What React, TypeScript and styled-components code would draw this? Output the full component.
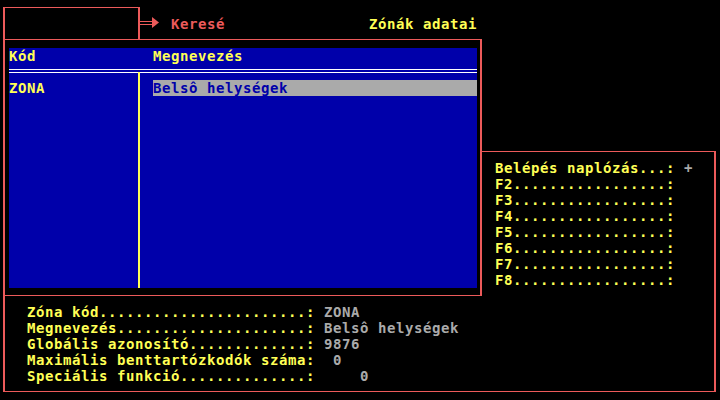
import { createGlobalStyle, styled } from "styled-components";

const colors = {
  black: "#000000",
  blue: "#0000aa",
  red: "#ec5a5a",
  yellow: "#ffff55",
  gray: "#aaaaaa",
  white: "#ffffff",
};

const details = [
  { label: "Zóna kód", value: "ZONA" },
  { label: "Megnevezés", value: "Belsô helységek" },
  { label: "Globális azonosító", value: "9876" },
  { label: "Maximális benttartózkodók száma", value: " 0" },
  { label: "Speciális funkció", value: "    0" },
];

const switches = [
  { label: "Belépés naplózás", value: "+" },
  { label: "F2", value: "" },
  { label: "F3", value: "" },
  { label: "F4", value: "" },
  { label: "F5", value: "" },
  { label: "F6", value: "" },
  { label: "F7", value: "" },
  { label: "F8", value: "" },
];

const dotted = (text: string, width: number) =>
  text + ".".repeat(Math.max(0, width - text.length)) + ":";

const App = () => {
  return (
    <>
      <GlobalStyle />
      <Screen>
        <SearchBox />
        <Arrow width="27" height="16" viewBox="0 0 27 16">
          <rect x="5" y="5" width="13" height="1" fill={colors.red} />
          <rect x="5" y="8" width="13" height="1" fill={colors.red} />
          <polygon points="17,1 24,6.5 17,12" fill={colors.red} />
        </Arrow>
        <SearchLabel>Keresé</SearchLabel>
        <WindowTitle>Zónák adatai</WindowTitle>

        <ListFrame>
          <ListBody>
            <ListHeader>
              <span>Kód</span>
              <span>Megnevezés</span>
            </ListHeader>
            <DoubleRule />
            <ListRows>
              <CodeColumn>
                <Row>ZONA</Row>
              </CodeColumn>
              <Separator />
              <NameColumn>
                <Row $selected>Belsô helységek</Row>
              </NameColumn>
            </ListRows>
          </ListBody>
        </ListFrame>

        <SwitchPanel>
          {switches.map((s) => (
            <Line key={s.label}>
              <Label>{dotted(s.label, 19)}</Label>
              <Value>{s.value ? " " + s.value : ""}</Value>
            </Line>
          ))}
        </SwitchPanel>

        <DetailPanel>
          {details.map((d) => (
            <Line key={d.label}>
              <Label>{dotted(d.label, 31)}</Label>
              <Value> {d.value}</Value>
            </Line>
          ))}
        </DetailPanel>
      </Screen>
    </>
  );
};

export default App;

const GlobalStyle = createGlobalStyle`
  html, body {
    margin: 0;
    padding: 0;
    background: #000000;
  }
`;

const Screen = styled.div`
  width: 720px;
  height: 400px;
  overflow: hidden;
  display: grid;
  grid-template-columns: repeat(80, 9px);
  grid-template-rows: repeat(25, 16px);
  background: ${colors.black};
  font-family: "DejaVu Sans Mono", "Liberation Mono", monospace;
  font-size: 14px;
  font-weight: bold;
  line-height: 16px;
  letter-spacing: 0.57px;
  white-space: pre;
`;

const SearchBox = styled.div`
  grid-column: 1 / 17;
  grid-row: 1 / 4;
  margin: 7px 4px 9px 3px;
  border: solid ${colors.red};
  border-width: 1px 2px 0 2px;
`;

const Arrow = styled.svg`
  grid-column: 16 / 19;
  grid-row: 2 / 3;
  display: block;
`;

const SearchLabel = styled.div`
  grid-column: 20 / 30;
  grid-row: 2 / 3;
  color: ${colors.red};
`;

const WindowTitle = styled.div`
  grid-column: 42 / 54;
  grid-row: 2 / 3;
  color: ${colors.yellow};
`;

const ListFrame = styled.div`
  grid-column: 1 / 55;
  grid-row: 3 / 20;
  margin: 7px 4px 8px 3px;
  border: solid ${colors.red};
  border-width: 1px 2px 1px 2px;
  padding: 8px 3px 7px 4px;
  display: flex;
`;

const ListBody = styled.div`
  flex: 1;
  display: flex;
  flex-direction: column;
  background: ${colors.blue};
  color: ${colors.yellow};
`;

const ListHeader = styled.div`
  height: 16px;
  display: grid;
  grid-template-columns: 144px 1fr;
`;

const DoubleRule = styled.div`
  height: 2px;
  margin: 5px 0 7px 0;
  border-top: 1px solid ${colors.white};
  border-bottom: 1px solid ${colors.white};
`;

const ListRows = styled.div`
  flex: 1;
  display: flex;
`;

const CodeColumn = styled.div`
  width: 126px;
`;

const Separator = styled.div`
  width: 2px;
  margin: -8px 4px 0 3px;
  background: ${colors.yellow};
`;

const NameColumn = styled.div`
  flex: 1;
  margin-left: 9px;
`;

const Row = styled.div<{ $selected?: boolean }>`
  height: 16px;
  color: ${(p) => (p.$selected ? colors.blue : colors.yellow)};
  background: ${(p) => (p.$selected ? colors.gray : "transparent")};
`;

const SwitchPanel = styled.div`
  grid-column: 54 / 81;
  grid-row: 10 / 26;
  margin: 7px 4px 8px 5px;
  border: solid ${colors.red};
  border-width: 1px 2px 1px 0;
  padding: 8px 0 0 13px;
`;

const DetailPanel = styled.div`
  grid-column: 1 / 55;
  grid-row: 19 / 26;
  margin: 8px 4px 8px 3px;
  border: solid ${colors.red};
  border-width: 0 0 1px 2px;
  padding: 8px 0 0 22px;
`;

const Line = styled.div`
  height: 16px;
`;

const Label = styled.span`
  color: ${colors.yellow};
`;

const Value = styled.span`
  color: ${colors.gray};
`;
